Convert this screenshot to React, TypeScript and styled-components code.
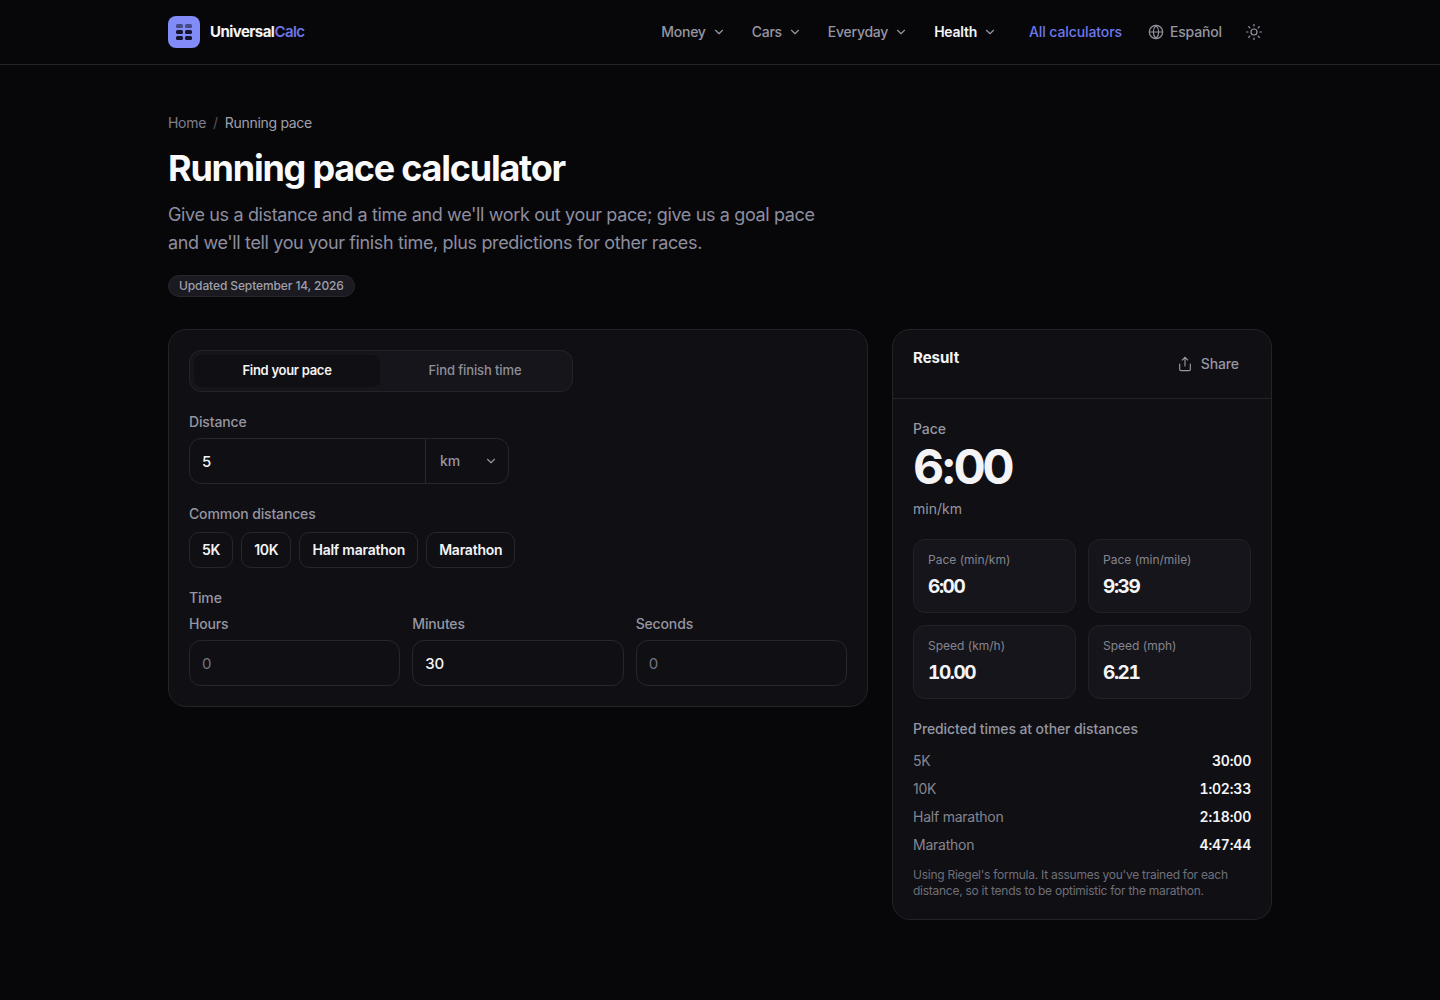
import * as React from 'react'
import styled, { createGlobalStyle } from 'styled-components'
import { ChevronDown, Globe, Sun, Share } from 'lucide-react'

const GlobalStyle = createGlobalStyle`
    * {
        box-sizing: border-box;
    }
    html, body {
        margin: 0;
        background: #07070a;
        color: #f4f4f6;
        font-family: Inter, 'Liberation Sans', sans-serif;
    }
`

const navItems = ['Money', 'Cars', 'Everyday', 'Health']
const chips = ['5K', '10K', 'Half marathon', 'Marathon']
const timeFields = [
    { label: 'Hours', value: '0', empty: true },
    { label: 'Minutes', value: '30', empty: false },
    { label: 'Seconds', value: '0', empty: true },
]
const stats = [
    { label: 'Pace (min/km)', value: '6:00' },
    { label: 'Pace (min/mile)', value: '9:39' },
    { label: 'Speed (km/h)', value: '10.00' },
    { label: 'Speed (mph)', value: '6.21' },
]
const predictions = [
    { label: '5K', value: '30:00' },
    { label: '10K', value: '1:02:33' },
    { label: 'Half marathon', value: '2:18:00' },
    { label: 'Marathon', value: '4:47:44' },
]

const LogoIcon = () => (
    <svg width="18" height="18" viewBox="0 0 18 18" fill="#14142b">
        <rect x="1" y="1" width="7" height="4" rx="1.5" opacity="0.55" />
        <rect x="10" y="1" width="7" height="4" rx="1.5" opacity="0.55" />
        <rect x="1" y="7" width="7" height="4" rx="1.5" />
        <rect x="10" y="7" width="7" height="4" rx="1.5" />
        <rect x="1" y="13" width="7" height="4" rx="1.5" />
        <rect x="10" y="13" width="7" height="4" rx="1.5" />
    </svg>
)

export default function App() {
    return (
        <>
            <GlobalStyle />
            <Header>
                <HeaderInner>
                    <Logo>
                        <LogoMark>
                            <LogoIcon />
                        </LogoMark>
                        <LogoText>
                            Universal<span>Calc</span>
                        </LogoText>
                    </Logo>
                    <Nav>
                        {navItems.map((item) => (
                            <NavItem key={item} $active={item === 'Health'}>
                                {item}
                                <ChevronDown size={14} strokeWidth={2} />
                            </NavItem>
                        ))}
                        <AllLink>All calculators</AllLink>
                        <LangLink>
                            <Globe size={16} strokeWidth={1.75} />
                            Español
                        </LangLink>
                        <ThemeButton>
                            <Sun size={18} strokeWidth={1.6} />
                        </ThemeButton>
                    </Nav>
                </HeaderInner>
            </Header>
            <Main>
                <Crumbs>
                    <span>Home</span>
                    <CrumbSep>/</CrumbSep>
                    <CrumbCurrent>Running pace</CrumbCurrent>
                </Crumbs>
                <Title>Running pace calculator</Title>
                <Lead>
                    Give us a distance and a time and we'll work out your pace; give us a goal pace and we'll tell
                    you your finish time, plus predictions for other races.
                </Lead>
                <Updated>Updated September 14, 2026</Updated>
                <Columns>
                    <FormCard>
                        <Tabs>
                            <Tab $active>Find your pace</Tab>
                            <Tab>Find finish time</Tab>
                        </Tabs>
                        <Label>Distance</Label>
                        <DistanceRow>
                            <DistanceValue>5</DistanceValue>
                            <UnitSelect>
                                km
                                <ChevronDown size={14} strokeWidth={2} />
                            </UnitSelect>
                        </DistanceRow>
                        <ChipLabel>Common distances</ChipLabel>
                        <Chips>
                            {chips.map((chip) => (
                                <Chip key={chip}>{chip}</Chip>
                            ))}
                        </Chips>
                        <TimeLabel>Time</TimeLabel>
                        <TimeGrid>
                            {timeFields.map((field) => (
                                <div key={field.label}>
                                    <TimeFieldLabel>{field.label}</TimeFieldLabel>
                                    <TimeInput $empty={field.empty}>{field.value}</TimeInput>
                                </div>
                            ))}
                        </TimeGrid>
                    </FormCard>
                    <ResultCard>
                        <ResultHead>
                            <ResultTitle>Result</ResultTitle>
                            <ShareButton>
                                <Share size={16} strokeWidth={1.75} />
                                Share
                            </ShareButton>
                        </ResultHead>
                        <ResultBody>
                            <BigLabel>Pace</BigLabel>
                            <BigValue>6:00</BigValue>
                            <BigUnit>min/km</BigUnit>
                            <StatGrid>
                                {stats.map((stat) => (
                                    <StatCard key={stat.label}>
                                        <StatLabel>{stat.label}</StatLabel>
                                        <StatValue>{stat.value}</StatValue>
                                    </StatCard>
                                ))}
                            </StatGrid>
                            <PredictTitle>Predicted times at other distances</PredictTitle>
                            <PredictList>
                                {predictions.map((row) => (
                                    <PredictRow key={row.label}>
                                        <span>{row.label}</span>
                                        <strong>{row.value}</strong>
                                    </PredictRow>
                                ))}
                            </PredictList>
                            <Note>
                                Using Riegel's formula. It assumes you've trained for each distance, so it tends to be
                                optimistic for the marathon.
                            </Note>
                        </ResultBody>
                    </ResultCard>
                </Columns>
            </Main>
        </>
    )
}

const Header = styled.header`
    height: 65px;
    border-bottom: 1px solid #232328;
`

const HeaderInner = styled.div`
    width: 1104px;
    height: 64px;
    margin: 0 auto;
    display: flex;
    align-items: center;
    justify-content: space-between;
`

const Logo = styled.div`
    display: flex;
    align-items: center;
    gap: 10px;
`

const LogoMark = styled.div`
    width: 32px;
    height: 32px;
    border-radius: 8px;
    background: #818cf8;
    display: flex;
    align-items: center;
    justify-content: center;
`

const LogoText = styled.div`
    margin-top: -1px;
    font-size: 15px;
    font-weight: 700;
    letter-spacing: -0.55px;
    color: #f4f4f6;

    span {
        color: #6c75e8;
        font-weight: 600;
    }
`

const Nav = styled.nav`
    display: flex;
    align-items: center;
    padding-right: 9px;
    padding-bottom: 2px;

    svg {
        margin-top: 2px;
    }
`

const NavItem = styled.div<{ $active?: boolean }>`
    display: flex;
    align-items: center;
    gap: 6px;
    margin-right: 26px;
    font-size: 14px;
    font-weight: ${({ $active }) => ($active ? 600 : 500)};
    letter-spacing: -0.25px;
    color: ${({ $active }) => ($active ? '#f4f4f6' : '#9696a1')};

    &:nth-child(4) {
        margin-right: 32px;
    }

    svg {
        color: #9696a1;
    }
`

const AllLink = styled.div`
    font-size: 14px;
    font-weight: 500;
    letter-spacing: -0.1px;
    color: #6f78ec;
    margin-right: 26px;
`

const LangLink = styled.div`
    display: flex;
    align-items: center;
    gap: 6px;
    font-size: 14px;
    font-weight: 500;
    letter-spacing: -0.15px;
    color: #9696a1;
    margin-right: 23px;
`

const ThemeButton = styled.div`
    display: flex;
    color: #9696a1;
`

const Main = styled.main`
    width: 1104px;
    margin: 0 auto;
    padding-top: 49px;
    padding-bottom: 80px;
`

const Crumbs = styled.div`
    display: flex;
    gap: 7px;
    font-size: 14px;
    line-height: 18px;
    letter-spacing: -0.3px;
    color: #7f7f8b;
`

const CrumbSep = styled.span`
    color: #55555e;
`

const CrumbCurrent = styled.span`
    color: #a0a0ab;
`

const Title = styled.h1`
    margin: 14px 0 0;
    font-size: 36px;
    line-height: 44px;
    font-weight: 700;
    letter-spacing: -1.24px;
    color: #fafafa;
`

const Lead = styled.p`
    margin: 11px 0 0;
    max-width: 660px;
    font-size: 18px;
    line-height: 28px;
    letter-spacing: -0.36px;
    color: #8e8e9f;
`

const Updated = styled.div`
    display: inline-flex;
    align-items: center;
    height: 22px;
    margin-top: 18px;
    padding: 0 10px 2px;
    border: 1px solid #26262c;
    border-radius: 11px;
    background: #1a1a20;
    font-size: 12px;
    font-weight: 500;
    letter-spacing: -0.11px;
    color: #a0a0ab;
`

const Columns = styled.div`
    display: grid;
    grid-template-columns: 700px 380px;
    gap: 24px;
    align-items: start;
    margin-top: 32px;
`

const FormCard = styled.section`
    padding: 20px;
    background: #0f0f14;
    border: 1px solid #232328;
    border-radius: 18px;
`

const Tabs = styled.div`
    display: grid;
    grid-template-columns: 1fr 1fr;
    gap: 2px;
    width: 384px;
    height: 42px;
    padding: 4px;
    background: #15151b;
    border: 1px solid #232328;
    border-radius: 12px;
`

const Tab = styled.div<{ $active?: boolean }>`
    display: flex;
    align-items: center;
    justify-content: center;
    padding-bottom: 2px;
    border-radius: 8px;
    font-size: 13px;
    font-weight: ${({ $active }) => ($active ? 600 : 500)};
    letter-spacing: ${({ $active }) => ($active ? '-0.28px' : '-0.12px')};
    color: ${({ $active }) => ($active ? '#f4f4f6' : '#8f8f9a')};
    background: ${({ $active }) => ($active ? '#0f0f14' : 'transparent')};
`

const Label = styled.div`
    margin-top: 21px;
    font-size: 14px;
    line-height: 17px;
    font-weight: 500;
    letter-spacing: -0.15px;
    color: #9696a1;
`

const DistanceRow = styled.div`
    display: flex;
    width: 320px;
    height: 46px;
    margin-top: 8px;
    border: 1px solid #26262c;
    border-radius: 12px;
`

const DistanceValue = styled.div`
    flex: 1;
    display: flex;
    align-items: center;
    padding-left: 12px;
    font-size: 15px;
    font-weight: 500;
    color: #f4f4f6;
`

const UnitSelect = styled.div`
    display: flex;
    align-items: center;
    justify-content: space-between;
    width: 83px;
    padding: 0 10px 2px 14px;
    border-left: 1px solid #26262c;
    font-size: 14px;
    font-weight: 500;
    color: #9696a1;

    svg {
        margin-top: 2px;
    }
`

const ChipLabel = styled(Label)`
    margin-top: 21px;
`

const Chips = styled.div`
    display: flex;
    gap: 8px;
    margin-top: 10px;
`

const Chip = styled.div`
    display: flex;
    align-items: center;
    height: 36px;
    padding: 0 12px 2px;
    border: 1px solid #26262c;
    border-radius: 10px;
    font-size: 14px;
    font-weight: 600;
    letter-spacing: -0.24px;
    color: #f4f4f6;
`

const TimeLabel = styled(Label)`
    margin-top: 21px;
`

const TimeGrid = styled.div`
    display: grid;
    grid-template-columns: repeat(3, 1fr);
    gap: 12px;
    margin-top: 9px;
`

const TimeFieldLabel = styled.div`
    font-size: 14px;
    line-height: 17px;
    font-weight: 500;
    letter-spacing: -0.15px;
    color: #9696a1;
`

const TimeInput = styled.div<{ $empty?: boolean }>`
    display: flex;
    align-items: center;
    height: 46px;
    margin-top: 8px;
    padding-left: 12px;
    border: 1px solid #26262c;
    border-radius: 12px;
    font-size: 15px;
    font-weight: ${({ $empty }) => ($empty ? 400 : 500)};
    letter-spacing: -0.2px;
    color: ${({ $empty }) => ($empty ? '#75757f' : '#f4f4f6')};
`

const ResultCard = styled.aside`
    background: #0f0f14;
    border: 1px solid #232328;
    border-radius: 18px;
`

const ResultHead = styled.div`
    display: flex;
    justify-content: space-between;
    height: 69px;
    padding: 19px 20px 0;
    border-bottom: 1px solid #232328;
`

const ResultTitle = styled.div`
    font-size: 15px;
    line-height: 18px;
    font-weight: 700;
    color: #f4f4f6;
`

const ShareButton = styled.div`
    display: flex;
    align-items: center;
    gap: 8px;
    height: 32px;
    margin-top: -1px;
    padding: 0 12px 2px;
    font-size: 14px;
    font-weight: 500;
    letter-spacing: -0.1px;
    color: #9696a1;

    svg {
        margin-top: 2px;
    }
`

const ResultBody = styled.div`
    padding: 21px 20px 20px;
`

const BigLabel = styled.div`
    font-size: 14px;
    line-height: 17px;
    font-weight: 500;
    letter-spacing: -0.1px;
    color: #9696a1;
`

const BigValue = styled.div`
    margin-top: 4px;
    font-size: 48px;
    line-height: 52px;
    font-weight: 700;
    letter-spacing: -3.4px;
    color: #f4f4f6;
`

const BigUnit = styled.div`
    margin-top: 7px;
    font-size: 14px;
    line-height: 17px;
    color: #9696a1;
`

const StatGrid = styled.div`
    display: grid;
    grid-template-columns: 1fr 1fr;
    gap: 12px;
    margin-top: 22px;
`

const StatCard = styled.div`
    height: 74px;
    padding: 12px 14px;
    background: #15151b;
    border: 1px solid #212127;
    border-radius: 12px;
`

const StatLabel = styled.div`
    font-size: 12px;
    line-height: 15px;
    color: #85858f;
`

const StatValue = styled.div`
    margin-top: 8px;
    font-size: 19px;
    line-height: 24px;
    font-weight: 700;
    font-variant-numeric: tabular-nums;
    letter-spacing: -1.4px;
    color: #f4f4f6;
`

const PredictTitle = styled.div`
    margin-top: 21px;
    font-size: 14px;
    line-height: 17px;
    font-weight: 500;
    letter-spacing: -0.1px;
    color: #9696a1;
`

const PredictList = styled.div`
    margin-top: 9px;
`

const PredictRow = styled.div`
    display: flex;
    justify-content: space-between;
    align-items: center;
    height: 28px;
    font-size: 14px;
    letter-spacing: -0.23px;
    color: #85858f;

    strong {
        font-weight: 600;
        font-variant-numeric: tabular-nums;
        letter-spacing: -0.2px;
        color: #f4f4f6;
    }
`

const Note = styled.p`
    margin: 9px 0 0;
    font-size: 12px;
    line-height: 16px;
    letter-spacing: -0.26px;
    color: #6f6f79;
`
